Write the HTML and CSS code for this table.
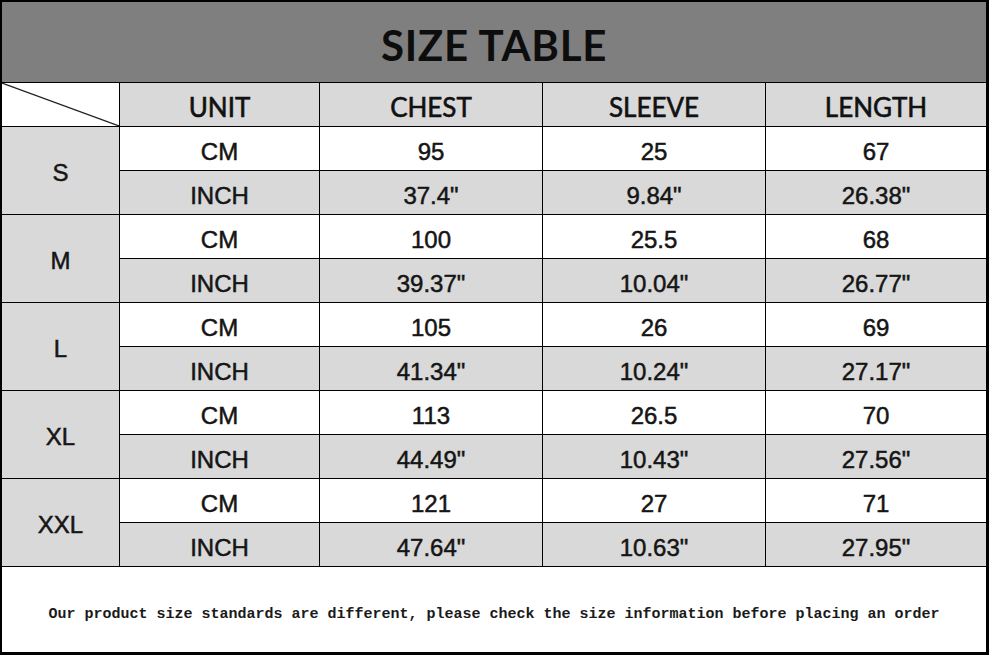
FILE: index.html
```html
<!DOCTYPE html>
<html lang="en">
<head>
<meta charset="utf-8">
<title>Size Table</title>
<link rel="stylesheet" href="styles.css">
</head>
<body>
<div class="sheet">
  <div class="title">SIZE TABLE</div>

  <div class="corner"><svg class="diag" viewBox="0 0 117 43" preserveAspectRatio="none"><line x1="0" y1="0" x2="117" y2="43" stroke="#222" stroke-width="1.2"/></svg></div>
  <div class="head">UNIT</div>
  <div class="head">CHEST</div>
  <div class="head">SLEEVE</div>
  <div class="head">LENGTH</div>

  <div class="size">S</div>
  <div class="cell w">CM</div><div class="cell w">95</div><div class="cell w">25</div><div class="cell w">67</div>
  <div class="cell g">INCH</div><div class="cell g">37.4"</div><div class="cell g">9.84"</div><div class="cell g">26.38"</div>

  <div class="size">M</div>
  <div class="cell w">CM</div><div class="cell w">100</div><div class="cell w">25.5</div><div class="cell w">68</div>
  <div class="cell g">INCH</div><div class="cell g">39.37"</div><div class="cell g">10.04"</div><div class="cell g">26.77"</div>

  <div class="size">L</div>
  <div class="cell w">CM</div><div class="cell w">105</div><div class="cell w">26</div><div class="cell w">69</div>
  <div class="cell g">INCH</div><div class="cell g">41.34"</div><div class="cell g">10.24"</div><div class="cell g">27.17"</div>

  <div class="size">XL</div>
  <div class="cell w">CM</div><div class="cell w">113</div><div class="cell w">26.5</div><div class="cell w">70</div>
  <div class="cell g">INCH</div><div class="cell g">44.49"</div><div class="cell g">10.43"</div><div class="cell g">27.56"</div>

  <div class="size">XXL</div>
  <div class="cell w">CM</div><div class="cell w">121</div><div class="cell w">27</div><div class="cell w">71</div>
  <div class="cell g">INCH</div><div class="cell g">47.64"</div><div class="cell g">10.63"</div><div class="cell g">27.95"</div>

  <div class="note">Our product size standards are different, please check the size information before placing an order</div>
</div>
</body>
</html>
```
FILE: styles.css
```css
html, body {
  margin: 0;
  padding: 0;
  background: #ffffff;
}

.sheet {
  width: 984px;
  height: 650px;
  border-style: solid;
  border-color: #000;
  border-width: 2px 3px 3px 2px;
  background: #000;
  display: grid;
  grid-template-columns: 117px 199px 222px 222px 220px;
  grid-template-rows: 80px 43px repeat(10, 43px) 85px;
  gap: 1px;
  color: #151515;
}

.title {
  grid-column: 1 / -1;
  background: #7f7f7f;
  display: flex;
  align-items: center;
  justify-content: center;
  padding-top: 6px;
  box-sizing: border-box;
  font-family: Lato, "Open Sans", sans-serif;
  font-weight: 700;
  font-size: 42px;
  letter-spacing: 0.7px;
  color: #0d0d0d;
}

.corner {
  background: #fff;
}

.diag {
  display: block;
  width: 100%;
  height: 100%;
}

.head {
  background: #d9d9d9;
  display: flex;
  align-items: center;
  justify-content: center;
  padding-top: 5px;
  box-sizing: border-box;
  font-family: Lato, "Open Sans", sans-serif;
  font-size: 26px;
  color: #111;
  -webkit-text-stroke: 0.6px #111;
}

.size {
  grid-row: span 2;
  background: #d9d9d9;
  display: flex;
  align-items: center;
  justify-content: center;
  padding-top: 4px;
  box-sizing: border-box;
  font-family: "Liberation Sans", Arial, sans-serif;
  font-size: 24px;
  -webkit-text-stroke: 0.5px #151515;
}

.size + .cell,
.size + .cell + .cell + .cell + .cell + .cell {
  grid-column: 2;
}

.cell {
  display: flex;
  align-items: center;
  justify-content: center;
  padding-top: 6px;
  box-sizing: border-box;
  font-family: "Liberation Sans", Arial, sans-serif;
  font-size: 24px;
  -webkit-text-stroke: 0.5px #151515;
}

.w { background: #ffffff; }
.g { background: #d9d9d9; }

.note {
  grid-column: 1 / -1;
  background: #fff;
  display: flex;
  align-items: center;
  justify-content: center;
  padding-top: 10px;
  box-sizing: border-box;
  font-family: "Liberation Mono", "Courier New", monospace;
  font-weight: 700;
  font-size: 15px;
  color: #1a1a1a;
}
```
